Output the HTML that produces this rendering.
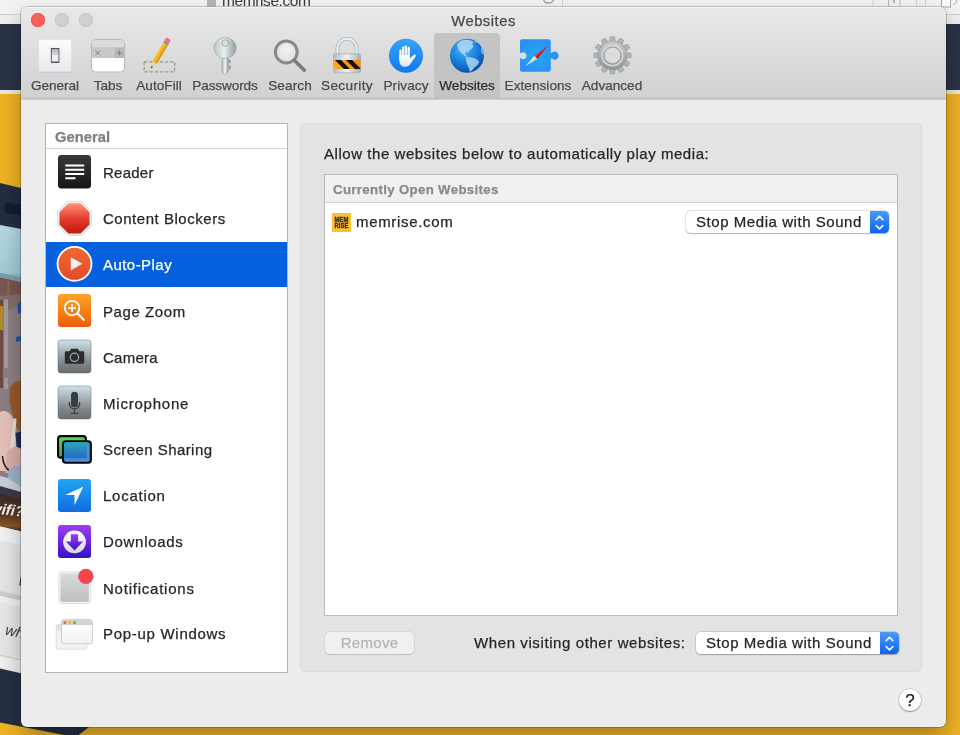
<!DOCTYPE html>
<html lang="en">
<head>
<meta charset="utf-8">
<title>Websites</title>
<style>
*{box-sizing:border-box;margin:0;padding:0}
html,body{width:960px;height:735px;overflow:hidden;background:#f1b425}
body{position:relative;-webkit-text-stroke:.25px;font-family:"Liberation Sans",sans-serif;color:#262626;-webkit-font-smoothing:antialiased}
.abs{position:absolute}
#bg{will-change:transform;position:absolute;left:0;top:0;width:960px;height:735px}
#win{will-change:transform;position:absolute;left:21px;top:7px;width:925px;height:720px;border-radius:6px;background:#ececec;
 box-shadow:0 0 0 .5px rgba(0,0,0,.3),0 12px 24px rgba(0,0,0,.3),0 0 2px rgba(0,0,0,.2);overflow:hidden}
#tb{position:absolute;left:0;top:0;width:925px;height:93px;background:linear-gradient(#e9e9e9,#d1d1d1 91px,#bfbfbf 91px,#bfbfbf 92px,#cdcdcd 92px);box-shadow:inset 0 1px 0 #f6f6f6}
.tl{position:absolute;top:6px;width:14px;height:14px;border-radius:50%}
#title{position:absolute;left:0;width:925px;top:5px;text-align:center;font-size:14.8px;line-height:18px;color:#4a4a4a}
.ti{position:absolute;top:26px;height:65px}
.ti .lbl{position:absolute;left:-40px;right:-40px;top:45px;text-align:center;font-size:13.6px;line-height:16px;color:#4b4b4b;white-space:nowrap}
.ti svg{position:absolute;top:6px;left:50%;margin-left:-17px;width:34px;height:34px;overflow:visible}
.ti.sel{background:#c4c4c4;border-radius:4px 4px 0 0}
.ti.sel .lbl{color:#2e2e2e}
#side{position:absolute;left:24px;top:116px;width:243px;height:550px;background:#fff;border:1px solid #b4b4b4}
#side .hd{position:absolute;left:0;top:0;width:241px;height:25px;border-bottom:1px solid #d6d6d6;font-weight:bold;font-size:14.8px;line-height:26px;padding-left:9px;color:#808080}
.row{position:absolute;left:0;width:241px;height:46px}
.row .t{position:absolute;left:57px;top:0;line-height:45px;font-size:15px;color:#262626;white-space:nowrap}
.row svg{position:absolute;left:11px;top:4px;width:35px;height:35px;overflow:visible}
.row.sel{background:#0560de;height:45px}
.row.sel .t{color:#fff}
#panel{position:absolute;left:279px;top:116px;width:622px;height:549px;background:#e3e3e3;border-radius:5px;box-shadow:inset 0 0 0 1px rgba(0,0,0,.03)}
#heading{position:absolute;left:303px;top:138px;font-size:15px;line-height:18px;white-space:nowrap;color:#262626}
#table{position:absolute;left:303px;top:167px;width:574px;height:442px;background:#fff;border:1px solid #b9b9b9}
#table .th{position:absolute;left:0;top:0;width:572px;height:28px;background:#f0f0f0;border-bottom:1px solid #d2d2d2;font-weight:bold;font-size:13.2px;line-height:29px;padding-left:8px;color:#8a8a8a}
.pop{position:absolute;height:22px;border-radius:4.5px;background:#fff;box-shadow:0 0 0 .5px rgba(0,0,0,.15),0 .5px 1.2px rgba(0,0,0,.25);font-size:15px;line-height:22px;padding-left:10px;white-space:nowrap;color:#262626}
.pop .st{position:absolute;right:0;top:0;width:19px;height:22px;border-radius:0 4.5px 4.5px 0;background:linear-gradient(#4b9bf9,#0a64f0)}
.pop .st svg{position:absolute;left:0;top:-.5px;width:19px;height:23px}
#remove{position:absolute;left:304px;top:625px;width:89px;height:22px;border-radius:4.5px;background:#f0f0f0;box-shadow:0 0 0 .5px rgba(0,0,0,.09),0 .5px 1px rgba(0,0,0,.12);font-size:15px;line-height:22px;text-align:center;color:#b4b4b4}
#when{position:absolute;left:453px;top:627px;font-size:15px;line-height:18px;white-space:nowrap}
#help{position:absolute;left:878px;top:682px;width:22px;height:22px;border-radius:50%;background:#fff;box-shadow:0 0 0 .5px rgba(0,0,0,.2),0 1px 1.5px rgba(0,0,0,.3);text-align:center;font-size:17px;line-height:23px;color:#222}
#site{left:31px;top:37px;font-size:15px;line-height:20px;white-space:nowrap}
</style>
</head>
<body>
<svg id="bg" viewBox="0 0 960 735">
 <defs>
  <linearGradient id="bgY" x1="0" y1="0" x2="1" y2="0"><stop offset="0" stop-color="#f2b526"/><stop offset="1" stop-color="#e9ad22"/></linearGradient>
  <linearGradient id="bgB" x1="0" y1="0" x2="0" y2="1"><stop offset="0" stop-color="#b6dce5"/><stop offset="0.850" stop-color="#a3cdd9"/><stop offset="1" stop-color="#86aebf"/></linearGradient>
  <linearGradient id="bgT" x1="0" y1="0" x2="0" y2="1"><stop offset="0" stop-color="#3a2a22"/><stop offset="0.450" stop-color="#5a3a22"/><stop offset="0.700" stop-color="#8a5626"/><stop offset="0.800" stop-color="#3a281e"/><stop offset="1" stop-color="#241a16"/></linearGradient>
 </defs>
 <rect x="0" y="0" width="960" height="735" fill="#f1b425"/>
 <!-- browser chrome strip -->
 <rect x="0" y="0" width="960" height="24" fill="#efefef"/>
 <rect x="0" y="0" width="960" height="14" fill="#f3f3f3"/>
 <rect x="0" y="14" width="960" height="1" fill="#d2d2d2"/>
 <rect x="207" y="0" width="9" height="6.500" fill="#b4b4b4"/>
 <text x="222" y="6.300" font-family="Liberation Sans, sans-serif" font-size="15.500" fill="#3a3a3a" textLength="89" lengthAdjust="spacing">memrise.com</text>
 <path d="M543.500 0a5.500 5.500 0 0 0 10 0" fill="none" stroke="#9a9a9a" stroke-width="1.200"/>
 <path d="M562.500 0v6.500M873 0v6.500M916.500 0v6.500M925.500 0v6.500" stroke="#d6d6d6" stroke-width="1"/>
 <path d="M888.500 0v6.500M900 0v6.500" stroke="#b9b9b9" stroke-width="1"/>
 <path d="M894 0v3" stroke="#8e8e8e" stroke-width="1.200"/>
 <rect x="941.500" y="-2" width="9" height="9" fill="#fbfbfb" stroke="#a8a8a8" stroke-width="1"/>
 <path d="M953 4.500c2.500 0 3.500-1.500 3.500-4.500" fill="none" stroke="#b0b0b0" stroke-width="1"/>
 <!-- page header navy -->
 <rect x="0" y="24" width="960" height="66" fill="#2a3447"/>
 <rect x="0" y="90" width="960" height="4" fill="#ece9e0"/>
 <!-- left page column (tilted card) -->
 <g>
  <path d="M0 183L24 188.700V240H0z" fill="#252e40"/>
  <path d="M4 206.500a5 5 0 0 1 5-4.300L24 205.800v10L9 213.500a5 5 0 0 1-5-4z" fill="#151d33"/>
  <path d="M0 225L24 229.600V280H0z" fill="url(#bgB)"/>
  <path d="M0 273L24 278.600V540H0z" fill="#8d8085"/>
  <path d="M0 273L24 278.600V283L0 277.500z" fill="#7e9fb0"/>
  <path d="M0 277.500L24 283V300L0 303z" fill="#785850"/>
  <path d="M0 296L24 294V306L0 312z" fill="#84706e"/>
  <path d="M0 300h4.500v88H0z" fill="#6f4c41"/>
  <path d="M3.500 300l4.500-1v90h-4.500z" fill="#a59ca1"/>
  <path d="M7.500 280l1.800 0.400v16l-1.800 0z" fill="#9a6a45"/>
  <path d="M0 306h3.500v24H0z" fill="#b58c2e"/>
  <path d="M17.500 304l3.500-2.500v11l-3 1.500zM16 337l5-1v5l-5 1z" fill="#1f57b3"/>
  <path d="M3 368h5v10H3z" fill="#8a8186"/>
  <path d="M10 388c4-8 9-8 14-6v50c-5 0-8-4-10-11c-2-8-6-21-4-33z" fill="#99592f"/>
  <path d="M0 412c5-3 11 1 13 7l8 52H0z" fill="#e6c2ba"/>
  <path d="M13.500 418l3 1l-4 50l-5 3z" fill="#e8e2de"/>
  <path d="M15.500 433l5.500-1.500v21l-4 1z" fill="#1f2a5c"/>
  <path d="M7 452c5-7 11-6 14-3v24H5z" fill="#dcb0a8"/>
  <path d="M2.500 456c0.500 7 3 13 8 15" fill="none" stroke="#1c1c22" stroke-width="1.500"/>
  <path d="M9 469l12-5v24H6z" fill="#9db5c9"/>
  <path d="M0 476l8 2l13 9v10H0z" fill="#c9d1dc"/>
  <path d="M0 486l21 6v8H0z" fill="#3b3a48"/>
  <path d="M0 494l24 5.500V540H0z" fill="url(#bgT)"/>
  <text x="-10.500" y="514" font-family="Liberation Sans, sans-serif" font-style="italic" font-weight="bold" font-size="15" fill="#f4f4f4" transform="rotate(7 0 514)">wifi?</text>
  <!-- answer cards -->
  <path d="M0 526.500L24 532V680H0z" fill="#e7e7e7"/>
  <path d="M0 526.500L24 532v14L0 540.500z" fill="#f3f3f3"/>
  <path d="M0 591L24 596.500v5L0 596z" fill="#cfcfcf"/>
  <path d="M0 596L24 601.500v6L0 602z" fill="#f1f1f1"/>
  <text x="18" y="585" font-family="Liberation Sans, sans-serif" font-style="italic" font-size="15" fill="#333" transform="rotate(12 18 585)">what</text>
  <text x="4.500" y="634.500" font-family="Liberation Sans, sans-serif" font-style="italic" font-size="15" fill="#3d3d3d" transform="rotate(12 4.500 634.500)">where</text>
  <path d="M0 653L24 658.500v14L0 667z" fill="#f0f0f0"/>
  <path d="M0 654L24 659.500v2L0 656z" fill="#d4d4d4"/>
  <path d="M0 668.500L24 674L100 690L89 727L78.700 735H64L0 722.600z" fill="#263044"/>
 </g>
</svg>


<div id="win">
 <div id="tb">
  <div class="tl" style="left:10px;background:#fc5f57;box-shadow:inset 0 0 0 .5px #e2463f"></div>
  <div class="tl" style="left:34px;background:#d1d1d1;box-shadow:inset 0 0 0 .5px #bdbdbd"></div>
  <div class="tl" style="left:58px;background:#d1d1d1;box-shadow:inset 0 0 0 .5px #bdbdbd"></div>
  <div id="title"><span id="ttl" style="letter-spacing:0.500px">Websites</span></div>

  <div class="ti" style="left:4px;width:60px"><svg viewBox="0 0 34 34"><defs><linearGradient id="gGen" x1="0" y1="0" x2="0" y2="1"><stop offset="0" stop-color="#fcfcfd"/><stop offset="1" stop-color="#e7e9ee"/></linearGradient><linearGradient id="gGs" x1="0" y1="0" x2="0" y2="1"><stop offset="0" stop-color="#b2b2b6"/><stop offset="1" stop-color="#dededf"/></linearGradient></defs><rect x="0.400" y="1.400" width="33.200" height="32" rx="1.200" fill="#b4b5b8"/><rect x="0.400" y="0.500" width="33.200" height="32.200" rx="1.200" fill="url(#gGen)" stroke="#dfe0e3" stroke-width="0.500"/><rect x="11.900" y="8.100" width="10.700" height="16.600" rx="0.800" fill="#fbfbfc" stroke="#dcdde0" stroke-width="0.500"/><rect x="12.900" y="9.100" width="8.500" height="15" rx="0.300" fill="#55555a"/><rect x="13.800" y="10" width="6.700" height="5.900" fill="url(#gGs)"/><rect x="13.800" y="15.900" width="6.700" height="6.600" fill="#eceef1"/></svg><div class="lbl"><span id="lbl_General" style="letter-spacing:-0.083px">General</span></div></div>
  <div class="ti" style="left:57px;width:60px"><svg viewBox="0 0 34 34"><rect x="0.500" y="0.500" width="33" height="32.500" rx="4" fill="#fff" stroke="#b9b6b9" stroke-width="1"/><path d="M1 4.500a3.500 3.500 0 0 1 3.500-3.500h25a3.500 3.500 0 0 1 3.500 3.500V8.800H1z" fill="#dddadd"/><rect x="1" y="8.800" width="32" height="10.200" fill="#cbc8cb"/><rect x="23.700" y="8.800" width="9.300" height="10.200" fill="#bab7ba"/><path d="M1 8.500h32" stroke="#bebbbe" stroke-width="0.600"/><path d="M4.300 11.400l4.800 4.800m0-4.800l-4.800 4.800M25.800 13.900h5.200m-2.600-2.600v5.200" stroke="#6f6d70" stroke-width="0.800" fill="none"/></svg><div class="lbl"><span id="lbl_Tabs" style="letter-spacing:0.000px">Tabs</span></div></div>
  <div class="ti" style="left:108px;width:60px"><svg viewBox="0 0 34 34"><rect x="2.100" y="22.900" width="30.600" height="10" fill="none" stroke="#858585" stroke-width="1" stroke-dasharray="3.200 2"/><g transform="translate(9 29.500) rotate(-59.300)"><path d="M0 0L7 -2.600V2.600z" fill="#ecd0a2"/><path d="M0 0L2.400 -0.900V0.900z" fill="#2e2e2e"/><rect x="7" y="-2.600" width="21.500" height="5.200" fill="#f7b51c"/><rect x="7" y="0.900" width="21.500" height="1.700" fill="#dc9612"/><rect x="7" y="-2.600" width="21.500" height="1.200" fill="#fbc94a"/><rect x="28.500" y="-2.700" width="2.400" height="5.400" fill="#7f8d9c"/><path d="M30.900 -2.700h2.200a1.600 1.600 0 0 1 1.600 1.600v2.200a1.600 1.600 0 0 1-1.600 1.600h-2.200z" fill="#ea6c9a"/></g></svg><div class="lbl"><span id="lbl_AutoFill" style="letter-spacing:0.036px">AutoFill</span></div></div>
  <div class="ti" style="left:174px;width:60px"><svg viewBox="0 0 34 34"><defs><linearGradient id="gKey" x1="0" y1="0" x2="1" y2="0"><stop offset="0" stop-color="#bcc7ca"/><stop offset="0.450" stop-color="#e9eeef"/><stop offset="1" stop-color="#8f9ca0"/></linearGradient><linearGradient id="gKs" x1="0" y1="0" x2="1" y2="0"><stop offset="0" stop-color="#aeb9bc"/><stop offset="0.400" stop-color="#f4f7f7"/><stop offset="0.600" stop-color="#aab5b8"/><stop offset="1" stop-color="#8f9ca0"/></linearGradient></defs><path d="M14 17h6.200v3l2.300 1.400v2.200l-2.300 1v1.500l2.300 1.400v2.400l-2.300 1.200v1.800l-3.100 2.600l-3.100-2.600z" fill="url(#gKs)" stroke="#8b979b" stroke-width="0.500"/><ellipse cx="17.100" cy="9" rx="11" ry="10.500" fill="url(#gKey)" stroke="#919da1" stroke-width="0.600"/><circle cx="17.250" cy="4" r="3.300" fill="#dcdcdc" stroke="#8d999d" stroke-width="0.700"/></svg><div class="lbl"><span id="lbl_Passwords" style="letter-spacing:-0.125px">Passwords</span></div></div>
  <div class="ti" style="left:239px;width:60px"><svg viewBox="0 0 34 34"><defs><radialGradient id="gSr" cx="0.500" cy="0.400" r="0.600"><stop offset="0" stop-color="#f2f2f2"/><stop offset="1" stop-color="#dedede"/></radialGradient></defs><circle cx="13.300" cy="13" r="10.900" fill="url(#gSr)" stroke="#888" stroke-width="3"/><path d="M21.300 21.200L31.300 31.200" stroke="#7d7d7d" stroke-width="3.600" stroke-linecap="round"/></svg><div class="lbl"><span id="lbl_Search" style="letter-spacing:0.100px">Search</span></div></div>
  <div class="ti" style="left:296px;width:60px"><svg viewBox="0 0 34 34"><defs><linearGradient id="gLk" x1="0" y1="0" x2="1" y2="0"><stop offset="0" stop-color="#b4bfc4"/><stop offset="0.500" stop-color="#eef2f3"/><stop offset="1" stop-color="#a5b0b4"/></linearGradient><linearGradient id="gLo" x1="0" y1="0" x2="1" y2="0"><stop offset="0" stop-color="#ffa92e"/><stop offset="0.500" stop-color="#f8981d"/><stop offset="1" stop-color="#f58a16"/></linearGradient></defs><path d="M7.400 16V9.300a9.600 9.600 0 0 1 19.200 0V16" fill="none" stroke="#b3c1cc" stroke-width="3.900"/><path d="M7.400 16V9.300a9.600 9.600 0 0 1 19.200 0V16" fill="none" stroke="#f0f3f5" stroke-width="1.700"/><rect x="3.500" y="14.800" width="27" height="19" rx="1.500" fill="url(#gLk)" stroke="#97a5b0" stroke-width="0.600"/><rect x="3.500" y="21" width="27" height="9" fill="url(#gLo)"/><path d="M5 21h6l9 9h-6zM16 21h6l8.500 8.500v0.500h-5.500z" fill="#14110d"/></svg><div class="lbl"><span id="lbl_Security" style="letter-spacing:0.357px">Security</span></div></div>
  <div class="ti" style="left:355px;width:60px"><svg viewBox="0 0 34 34"><defs><linearGradient id="gPv" x1="0" y1="0" x2="0" y2="1"><stop offset="0" stop-color="#36a2fb"/><stop offset="1" stop-color="#0f78ee"/></linearGradient><linearGradient id="gPh" x1="0" y1="0" x2="0" y2="1"><stop offset="0" stop-color="#ffffff"/><stop offset="1" stop-color="#dfe3e8"/></linearGradient></defs><circle cx="17" cy="16.800" r="17" fill="url(#gPv)"/><g fill="url(#gPh)"><rect x="10.300" y="10.500" width="2.300" height="11" rx="1.150"/><rect x="12.900" y="7.400" width="2.400" height="13" rx="1.200"/><rect x="15.700" y="6.500" width="2.400" height="14" rx="1.200"/><rect x="18.500" y="7.800" width="2.400" height="13" rx="1.200"/><path d="M10.300 16V21.500C10.300 25.500 12.800 27.800 16 27.800C19 27.800 20.800 26.300 22.200 23.800L26.600 17.400C27.300 16.200 25.800 14.800 24.700 15.900L20.900 19.600V16z"/></g></svg><div class="lbl"><span id="lbl_Privacy" style="letter-spacing:0.083px">Privacy</span></div></div>
  <div class="ti sel" style="left:413px;width:66px"><svg viewBox="0 0 34 34"><defs><radialGradient id="gGl" cx="0.400" cy="0.300" r="0.750"><stop offset="0" stop-color="#4db2f6"/><stop offset="0.500" stop-color="#1a86e0"/><stop offset="0.850" stop-color="#0b5db8"/><stop offset="1" stop-color="#09479a"/></radialGradient><clipPath id="cGl"><circle cx="17" cy="16.700" r="17"/></clipPath></defs><circle cx="17" cy="16.700" r="17" fill="url(#gGl)"/><g clip-path="url(#cGl)" fill="#b4d9f5" opacity="0.820"><path d="M6.900 5.200L9.500 2.800L12.500 1.300L17 0.800L21 1.600L23.900 3.200L22 4.800L23.500 6.500L22.600 9L20.500 10.800L18.600 12.200L18.300 13.900L16.800 13L15 13.600L15.800 16L17.600 18.200L16.600 18.400L14.200 16.500L11.200 14L8.600 11L7.600 8z"/><path d="M15.600 18.400L18.500 18L22 18.600L25 19.600L27.500 21L29.200 22.700L27.800 25.500L25.500 27.500L23.700 29.300L22 31.500L20 32.900L19.200 30.500L18.300 27.700L17 25L16.200 22.200z"/><path d="M31 8L33 9.500L34.500 14L33.500 16L31.500 14.500L30.800 11z" opacity="0.700"/><path d="M25 1.500L28 2.500L27 4L24.800 3.200z" opacity="0.800"/></g></svg><div class="lbl"><span id="lbl_Websites" style="letter-spacing:-0.036px">Websites</span></div></div>
  <div class="ti" style="left:487px;width:60px"><svg viewBox="0 0 34 34"><defs><radialGradient id="gEx" cx="0.450" cy="0.500" r="0.600"><stop offset="0" stop-color="#1cacf1"/><stop offset="1" stop-color="#2f8cf4"/></radialGradient></defs><path d="M-1 2.200a2 2 0 0 1 2-2h26.800a2 2 0 0 1 2 2v10.900c0 1 0.500 1.300 1.200 0.700a3.900 3.900 0 1 1 0 5.800c-0.700-0.600-1.200-0.300-1.200 0.700v10.400a2 2 0 0 1-2 2H1a2 2 0 0 1-2-2V20.300c0-1 0.500-1.300 1.200-0.800a3.400 3.400 0 1 0 0-5.600c-0.700 0.500-1.200 0.200-1.200-0.800z" fill="url(#gEx)"/><path d="M26.500 6.800L16.300 20L13.300 17z" fill="#ee2a30"/><path d="M26.500 6.800L16.300 20L14.800 18.500z" fill="#c2121b"/><path d="M4.800 26.800L13.300 17L16.300 20z" fill="#f7f7f7"/><path d="M4.800 26.800L14.800 18.500L16.300 20z" fill="#c3c8ce"/></svg><div class="lbl"><span id="lbl_Extensions" style="letter-spacing:0.028px">Extensions</span></div></div>
  <div class="ti" style="left:561px;width:60px"><svg viewBox="0 0 34 34"><defs><linearGradient id="gGr" x1="0" y1="0" x2="0" y2="1"><stop offset="0" stop-color="#c3c7c9"/><stop offset="1" stop-color="#94999b"/></linearGradient></defs><g transform="translate(17.500 16.400)"><g fill="#b1b5b7" stroke="#8d9294" stroke-width="0.600" stroke-linejoin="round"><path d="M-3.100 -12L-2.100 -18.600H2.100L3.100 -12z" transform="rotate(0)"/><path d="M-3.100 -12L-2.100 -18.600H2.100L3.100 -12z" transform="rotate(30)"/><path d="M-3.100 -12L-2.100 -18.600H2.100L3.100 -12z" transform="rotate(60)"/><path d="M-3.100 -12L-2.100 -18.600H2.100L3.100 -12z" transform="rotate(90)"/><path d="M-3.100 -12L-2.100 -18.600H2.100L3.100 -12z" transform="rotate(120)"/><path d="M-3.100 -12L-2.100 -18.600H2.100L3.100 -12z" transform="rotate(150)"/><path d="M-3.100 -12L-2.100 -18.600H2.100L3.100 -12z" transform="rotate(180)"/><path d="M-3.100 -12L-2.100 -18.600H2.100L3.100 -12z" transform="rotate(210)"/><path d="M-3.100 -12L-2.100 -18.600H2.100L3.100 -12z" transform="rotate(240)"/><path d="M-3.100 -12L-2.100 -18.600H2.100L3.100 -12z" transform="rotate(270)"/><path d="M-3.100 -12L-2.100 -18.600H2.100L3.100 -12z" transform="rotate(300)"/><path d="M-3.100 -12L-2.100 -18.600H2.100L3.100 -12z" transform="rotate(330)"/></g><circle r="11.300" fill="none" stroke="#8d9294" stroke-width="6.600"/><circle r="11.300" fill="none" stroke="url(#gGr)" stroke-width="5.600"/><circle r="10.300" fill="none" stroke="#d3d6d7" stroke-width="1.600"/></g></svg><div class="lbl"><span id="lbl_Advanced" style="letter-spacing:0.000px">Advanced</span></div></div>
 </div>
 <div id="side">
  <div class="hd">General</div>
  <div class="row" style="top:26.00px"><svg viewBox="0 0 36 36"><defs><linearGradient id="gRd" x1="0" y1="0" x2="0" y2="1"><stop offset="0" stop-color="#383838"/><stop offset="1" stop-color="#161616"/></linearGradient></defs><rect x="1" y="1" width="34" height="34.500" rx="3.500" fill="url(#gRd)"/><path d="M8.500 11.800h19.500M8.500 16.200h19.500M8.500 20.600h19.500M8.500 25h10.500" stroke="#fff" stroke-width="2.100"/></svg><div class="t" style="margin-top:0px"><span id="t0" style="letter-spacing:0.240px">Reader</span></div></div>
  <div class="row" style="top:72.26px"><svg viewBox="0 0 36 36"><defs><linearGradient id="gCb" x1="0" y1="0" x2="0" y2="1"><stop offset="0" stop-color="#ff9078"/><stop offset="0.550" stop-color="#e2372b"/><stop offset="1" stop-color="#c5180c"/></linearGradient></defs><g transform="translate(0 0.900)"><path d="M11 0.500h14l10.500 10.500v14L25 35.500H11L0.500 25V11z" fill="#f6f4f3" stroke="#d6d2d0" stroke-width="0.800"/><path d="M11.800 2.500h12.400l9.300 9.300v12.400l-9.300 9.300H11.800L2.500 24.200V11.800z" fill="url(#gCb)"/></g></svg><div class="t" style="margin-top:0px"><span id="t1" style="letter-spacing:0.533px">Content Blockers</span></div></div>
  <div class="row sel" style="top:118.00px"><svg viewBox="0 0 36 36"><defs><linearGradient id="gAp" x1="0" y1="0" x2="0" y2="1"><stop offset="0" stop-color="#f0692f"/><stop offset="1" stop-color="#e34a2b"/></linearGradient><linearGradient id="gApT" x1="0" y1="0" x2="1" y2="1"><stop offset="0" stop-color="#ffffff"/><stop offset="1" stop-color="#dcdcdc"/></linearGradient></defs><circle cx="18" cy="18.300" r="18.400" fill="#fff"/><circle cx="18" cy="18.300" r="16.500" fill="url(#gAp)"/><path d="M14.200 11.500v13.600l12-6.800z" fill="url(#gApT)"/></svg><div class="t" style="margin-top:0px"><span id="t2" style="letter-spacing:0.450px">Auto-Play</span></div></div>
  <div class="row" style="top:164.78px"><svg viewBox="0 0 36 36"><defs><linearGradient id="gPz" x1="0" y1="0" x2="0" y2="1"><stop offset="0" stop-color="#fca42c"/><stop offset="0.700" stop-color="#f3740f"/><stop offset="1" stop-color="#ec5a10"/></linearGradient></defs><rect x="1" y="1" width="34" height="34" rx="3" fill="url(#gPz)"/><circle cx="15.500" cy="15.500" r="7.500" fill="none" stroke="#fff" stroke-width="1.800"/><path d="M15.500 11.500v8M11.500 15.500h8" stroke="#fff" stroke-width="1.800"/><path d="M21 21l6.500 6.500" stroke="#fff" stroke-width="2.400" stroke-linecap="round"/></svg><div class="t" style="margin-top:0px"><span id="t3" style="letter-spacing:0.575px">Page Zoom</span></div></div>
  <div class="row" style="top:211.04px"><svg viewBox="0 0 36 36"><defs><linearGradient id="gCm" x1="0" y1="0" x2="0" y2="1"><stop offset="0" stop-color="#cfe1e8"/><stop offset="0.350" stop-color="#a7b4b9"/><stop offset="0.700" stop-color="#7f8588"/><stop offset="1" stop-color="#6b6e70"/></linearGradient></defs><rect x="1" y="1" width="34" height="34" rx="3" fill="url(#gCm)" stroke="#56707f" stroke-opacity="0.600" stroke-width="0.800"/><path d="M8 14a1.500 1.500 0 0 1 1.500-1.500h3.500l1.500-2.500h7l1.500 2.500h3.500A1.500 1.500 0 0 1 28 14v10a1.500 1.500 0 0 1-1.500 1.500h-17A1.500 1.500 0 0 1 8 24z" fill="#2c2c2c"/><circle cx="18" cy="18.800" r="4.300" fill="none" stroke="#a3acb0" stroke-width="1.200"/></svg><div class="t" style="margin-top:0px"><span id="t4" style="letter-spacing:0.240px">Camera</span></div></div>
  <div class="row" style="top:257.30px"><svg viewBox="0 0 36 36"><defs><linearGradient id="gMc" x1="0" y1="0" x2="0" y2="1"><stop offset="0" stop-color="#cfe1e8"/><stop offset="0.350" stop-color="#a7b4b9"/><stop offset="0.700" stop-color="#7f8588"/><stop offset="1" stop-color="#6b6e70"/></linearGradient></defs><rect x="1" y="1" width="34" height="34" rx="3" fill="url(#gMc)" stroke="#56707f" stroke-opacity="0.600" stroke-width="0.800"/><rect x="14.400" y="7" width="7.200" height="16" rx="3.600" fill="#3c3c3c"/><path d="M12.700 17.500v1.800a5.300 5.300 0 0 0 10.600 0v-1.800M18 25v4M13.800 29.200h8.400" fill="none" stroke="#3c3c3c" stroke-width="1.300"/></svg><div class="t" style="margin-top:0px"><span id="t5" style="letter-spacing:0.778px">Microphone</span></div></div>
  <div class="row" style="top:303.56px"><svg viewBox="0 0 36 36"><defs><linearGradient id="gS1" x1="0" y1="0" x2="0" y2="1"><stop offset="0" stop-color="#55d862"/><stop offset="1" stop-color="#2eae3f"/></linearGradient><linearGradient id="gS2" x1="0" y1="0" x2="0" y2="1"><stop offset="0" stop-color="#2aa6ba"/><stop offset="1" stop-color="#2a68c2"/></linearGradient></defs><g transform="translate(0 -0.700)"><rect x="1.100" y="5" width="28.600" height="22.100" rx="2.800" fill="url(#gS1)" stroke="#080808" stroke-width="2.200"/><rect x="6.200" y="10.200" width="28.600" height="22.100" rx="2.800" fill="#4a8ee2" stroke="#080808" stroke-width="2.200"/><path d="M7.300 13a1.700 1.700 0 0 1 1.700-1.700h21.700v16.500H7.300z" fill="url(#gS2)"/></g></svg><div class="t" style="margin-top:-1px"><span id="t6" style="letter-spacing:0.431px">Screen Sharing</span></div></div>
  <div class="row" style="top:349.82px"><svg viewBox="0 0 36 36"><defs><linearGradient id="gLc" x1="0" y1="0" x2="0" y2="1"><stop offset="0" stop-color="#20a6f4"/><stop offset="1" stop-color="#0f6ce0"/></linearGradient></defs><rect x="1" y="1" width="34" height="34" rx="3" fill="url(#gLc)"/><path d="M27 9L8.500 17.500h9.500V28z" fill="#fff"/></svg><div class="t" style="margin-top:-1px"><span id="t7" style="letter-spacing:0.743px">Location</span></div></div>
  <div class="row" style="top:396.08px"><svg viewBox="0 0 36 36"><defs><linearGradient id="gDl" x1="0" y1="0" x2="0" y2="1"><stop offset="0" stop-color="#a03cf2"/><stop offset="1" stop-color="#3510c4"/></linearGradient><linearGradient id="gDc" x1="0" y1="0" x2="0" y2="1"><stop offset="0" stop-color="#ffffff"/><stop offset="1" stop-color="#d9d6e2"/></linearGradient></defs><rect x="1" y="1" width="34" height="34" rx="3" fill="url(#gDl)"/><circle cx="18" cy="18.500" r="11.700" fill="url(#gDc)"/><path d="M14.300 10.500h7.400v7.600h5.200L18 27.300L9.100 18.100h5.200z" fill="url(#gDl)"/></svg><div class="t" style="margin-top:-1px"><span id="t8" style="letter-spacing:0.700px">Downloads</span></div></div>
  <div class="row" style="top:442.34px"><svg viewBox="0 0 36 36"><defs><linearGradient id="gNt" x1="0" y1="0" x2="0" y2="1"><stop offset="0" stop-color="#d9dadc"/><stop offset="1" stop-color="#bdbec0"/></linearGradient></defs><rect x="1.800" y="1.900" width="32.800" height="32.500" rx="3" fill="#f4f2f2" stroke="#dedada" stroke-width="0.800"/><rect x="3.600" y="3.700" width="29.200" height="28.900" rx="1.500" fill="url(#gNt)"/><circle cx="29.700" cy="6.500" r="7.900" fill="#f4474b"/></svg><div class="t" style="margin-top:0px"><span id="t9" style="letter-spacing:0.767px">Notifications</span></div></div>
  <div class="row" style="top:488.60px"><svg viewBox="0 0 36 36"><defs><linearGradient id="gPw" x1="0" y1="0" x2="0" y2="1"><stop offset="0" stop-color="#ffffff"/><stop offset="1" stop-color="#f1f1f1"/></linearGradient></defs><rect x="-0.800" y="7.600" width="31.500" height="25.500" rx="2" fill="#f3f3f3" stroke="#d4d4d4" stroke-width="0.800"/><rect x="-0.800" y="7.600" width="6" height="6.500" fill="#e4e4e4"/><rect x="4.600" y="2.500" width="31.700" height="25.100" rx="2.500" fill="url(#gPw)" stroke="#c2c2c2" stroke-width="0.800"/><path d="M4.600 5a2.500 2.500 0 0 1 2.500-2.500h26.700A2.500 2.500 0 0 1 36.300 5v3.300H4.600z" fill="#d4d4d4"/><circle cx="8.200" cy="5.700" r="1.600" fill="#ee5f57"/><circle cx="13.100" cy="5.700" r="1.600" fill="#f5b42d"/><circle cx="18.100" cy="5.700" r="1.600" fill="#4fc038"/></svg><div class="t" style="margin-top:-2px"><span id="t10" style="letter-spacing:0.708px">Pop-up Windows</span></div></div>
 </div>
 <div id="panel"></div>
 <div id="heading"><span id="hdg" style="letter-spacing:0.552px">Allow the websites below to automatically play media:</span></div>
 <div id="table">
  <div class="th"><span id="th" style="letter-spacing:0.364px">Currently Open Websites</span></div>
  <svg class="abs" style="left:7px;top:38px;width:19px;height:19px" viewBox="0 0 20 20"><rect width="20" height="20" fill="#fdc02f"/><text x="10" y="9.500" font-family="Liberation Sans, sans-serif" font-weight="bold" font-size="8.400" stroke="#23233b" stroke-width="0.300" text-anchor="middle" fill="#23233b" textLength="14.5" lengthAdjust="spacingAndGlyphs">MEM</text><text x="10" y="16.100" font-family="Liberation Sans, sans-serif" font-weight="bold" font-size="8.400" stroke="#23233b" stroke-width="0.300" text-anchor="middle" fill="#23233b" textLength="14.5" lengthAdjust="spacingAndGlyphs">RiSE</text></svg>
  <div class="abs" id="site"><span id="sitet" style="letter-spacing:0.680px">memrise.com</span></div>
  <div class="pop" style="left:361px;top:36px;width:203px"><span id="pop1" style="letter-spacing:0.555px">Stop Media with Sound</span><div class="st"><svg viewBox="0 0 19 23"><path d="M6.100 8.700l3.400-3.400l3.400 3.400M6.100 14.500l3.400 3.400l3.400-3.400" fill="none" stroke="#fff" stroke-width="1.600" stroke-linecap="round" stroke-linejoin="round"/></svg></div></div>
 </div>
 <div id="remove"><span id="rmv" style="letter-spacing:0.310px">Remove</span></div>
 <div id="when"><span id="whn" style="letter-spacing:0.596px">When visiting other websites:</span></div>
 <div class="pop" style="left:675px;top:625px;width:203px"><span id="pop2" style="letter-spacing:0.550px">Stop Media with Sound</span><div class="st"><svg viewBox="0 0 19 23"><path d="M6.100 8.700l3.400-3.400l3.400 3.400M6.100 14.500l3.400 3.400l3.400-3.400" fill="none" stroke="#fff" stroke-width="1.600" stroke-linecap="round" stroke-linejoin="round"/></svg></div></div>
 <div id="help">?</div>
</div>
</body>
</html>
